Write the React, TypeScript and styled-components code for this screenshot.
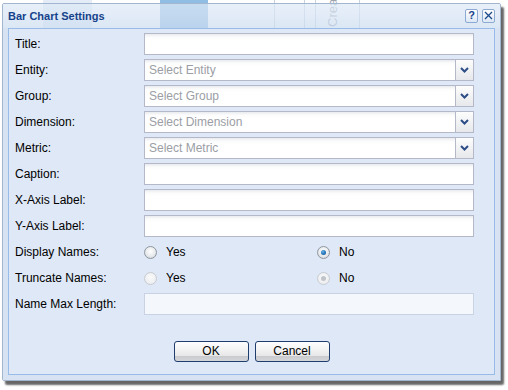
import React from "react";
import styled, { createGlobalStyle } from "styled-components";

const GlobalStyle = createGlobalStyle`
  html, body {
    margin: 0;
    padding: 0;
  }
  body {
    width: 508px;
    height: 390px;
    overflow: hidden;
    background: #ffffff;
    font-family: "Liberation Sans", Arial, sans-serif;
  }
`;

const Desktop = styled.div`
  position: relative;
  width: 508px;
  height: 390px;
  overflow: hidden;
  background: #ffffff;
`;

/* underlying grid columns that show through the window header */
const Column = styled.div<{ $left: number; $width: number; $color: string }>`
  position: absolute;
  top: 0;
  left: ${(p) => p.$left}px;
  width: ${(p) => p.$width}px;
  height: 40px;
  background: ${(p) => p.$color};
`;

const GridLine = styled.div<{ $left: number }>`
  position: absolute;
  top: 0;
  left: ${(p) => p.$left}px;
  width: 1px;
  height: 40px;
  background: #c9d3df;
`;

const VerticalText = styled.div`
  position: absolute;
  top: 0;
  left: 326px;
  width: 13px;
  height: 27px;
  writing-mode: vertical-rl;
  transform: rotate(180deg);
  font-size: 13px;
  color: #9ea5af;
  line-height: 13px;
  white-space: nowrap;
`;

const Window = styled.div`
  position: absolute;
  left: 2px;
  top: 3px;
  width: 499px;
  height: 378px;
  box-sizing: border-box;
  border: 1px solid #a3b6d0;
  border-radius: 2px;
  box-shadow: 3px 4px 2px rgba(0, 0, 0, 0.6);
  display: flex;
  flex-direction: column;
`;

const Header = styled.div`
  height: 23px;
  display: flex;
  align-items: center;
  padding: 0 5px 1px 5px;
  background: linear-gradient(
    rgba(222, 233, 246, 0.7),
    rgba(205, 221, 241, 0.7)
  );
`;

const Title = styled.div`
  flex: 1;
  font-size: 11px;
  font-weight: bold;
  color: #15428b;
`;

const Tools = styled.div`
  display: flex;
  gap: 4px;
`;

const Tool = styled.div`
  width: 13px;
  height: 14px;
  box-sizing: border-box;
  border: 1px solid #8daad3;
  border-radius: 2px;
  background: linear-gradient(#ffffff, #dce7f5);
  display: flex;
  align-items: center;
  justify-content: center;
  color: #15428b;
  font-size: 11px;
  font-weight: bold;
  line-height: 1;
`;

const Frame = styled.div`
  flex: 1;
  display: flex;
  padding: 0 5px 5px 5px;
  background: #d7e3f3;
`;

const Panel = styled.div`
  flex: 1;
  border: 1px solid #99bbe8;
  background: #dfe8f6;
  display: flex;
  flex-direction: column;
  padding: 4px 20px 0 6px;
`;

const Form = styled.div`
  display: grid;
  grid-template-columns: 129px 1fr;
  grid-auto-rows: 22px;
  row-gap: 4px;
  align-items: center;
`;

const Label = styled.div`
  font-size: 12px;
  color: #000;
`;

const TextField = styled.div<{ $disabled?: boolean }>`
  height: 22px;
  box-sizing: border-box;
  border: 1px solid ${(p) => (p.$disabled ? "#c9d3e3" : "#b5b8c8")};
  background: ${(p) =>
    p.$disabled
      ? "#f4f7fb"
      : "linear-gradient(#e9ebee 0px, #fbfbfc 3px, #ffffff 6px)"};
`;

const Combo = styled.div`
  height: 22px;
  box-sizing: border-box;
  border: 1px solid #b5b8c8;
  background: linear-gradient(#e9ebee 0px, #fbfbfc 3px, #ffffff 6px);
  display: flex;
  align-items: center;
`;

const Placeholder = styled.div`
  flex: 1;
  padding-left: 4px;
  font-size: 12px;
  color: #9b9ea5;
`;

const Trigger = styled.div`
  width: 17px;
  height: 100%;
  border-left: 1px solid #b5b8c8;
  background: linear-gradient(#fdfdfd, #e6e8eb);
  display: flex;
  align-items: center;
  justify-content: center;
`;

const RadioGroup = styled.div`
  display: grid;
  grid-template-columns: 173px 1fr;
  align-items: center;
`;

const RadioItem = styled.div`
  display: flex;
  align-items: center;
  gap: 9px;
  font-size: 12px;
  color: #000;
`;

const RadioCircle = styled.span<{ $checked?: boolean; $disabled?: boolean }>`
  width: 13px;
  height: 13px;
  box-sizing: border-box;
  border-radius: 50%;
  border: 1px solid ${(p) => (p.$disabled ? "#c8ccd2" : "#8e969f")};
  background: ${(p) =>
    p.$disabled
      ? "radial-gradient(circle at 50% 40%, #fafafa 0, #eceef0 70%)"
      : "radial-gradient(circle at 50% 40%, #ffffff 0, #e8eaed 55%, #c8cdd3 100%)"};
  display: flex;
  align-items: center;
  justify-content: center;

  &::after {
    content: "";
    display: ${(p) => (p.$checked ? "block" : "none")};
    width: 5px;
    height: 5px;
    border-radius: 50%;
    background: ${(p) =>
      p.$disabled
        ? "#c0c4c9"
        : "radial-gradient(circle at 40% 35%, #5fb3ea 0, #1563a8 70%, #0d3f73 100%)"};
  }
`;

const ButtonBar = styled.div`
  margin-top: auto;
  padding-bottom: 12px;
  padding-left: 14px;
  display: flex;
  justify-content: center;
  gap: 6px;
`;

const Button = styled.button`
  width: 75px;
  height: 21px;
  padding: 0 0 2px 0;
  box-sizing: border-box;
  border: 1px solid #1f3e6e;
  border-radius: 3px;
  background: linear-gradient(
    #fefefe 0%,
    #f3f3f3 40%,
    #e7e7e7 72%,
    #c9cbce 76%,
    #d4d6d9 100%
  );
  font-family: "Liberation Sans", Arial, sans-serif;
  font-size: 12px;
  color: #000;
`;

const Chevron = () => (
  <svg width="9" height="6" viewBox="0 0 9 6">
    <path d="M1 1 L4.5 4.5 L8 1" fill="none" stroke="#2c4d86" strokeWidth="2" />
  </svg>
);

const CloseIcon = () => (
  <svg width="9" height="9" viewBox="0 0 9 9">
    <path d="M1 1 L8 8 M8 1 L1 8" stroke="#1f4a8c" strokeWidth="1.3" />
  </svg>
);

const combos = [
  { label: "Entity:", placeholder: "Select Entity" },
  { label: "Group:", placeholder: "Select Group" },
  { label: "Dimension:", placeholder: "Select Dimension" },
  { label: "Metric:", placeholder: "Select Metric" },
];

const App: React.FC = () => {
  return (
    <Desktop>
      <GlobalStyle />
      <Column $left={43} $width={49} $color="#e4edf7" />
      <Column $left={160} $width={48} $color="#8fbde3" />
      <GridLine $left={274} />
      <GridLine $left={304} />
      <GridLine $left={315} />
      <GridLine $left={359} />
      <VerticalText>Crea</VerticalText>

      <Window>
        <Header>
          <Title>Bar Chart Settings</Title>
          <Tools>
            <Tool>?</Tool>
            <Tool>
              <CloseIcon />
            </Tool>
          </Tools>
        </Header>

        <Frame>
          <Panel>
            <Form>
              <Label>Title:</Label>
              <TextField />

              {combos.map((c) => (
                <React.Fragment key={c.label}>
                  <Label>{c.label}</Label>
                  <Combo>
                    <Placeholder>{c.placeholder}</Placeholder>
                    <Trigger>
                      <Chevron />
                    </Trigger>
                  </Combo>
                </React.Fragment>
              ))}

              <Label>Caption:</Label>
              <TextField />
              <Label>X-Axis Label:</Label>
              <TextField />
              <Label>Y-Axis Label:</Label>
              <TextField />

              <Label>Display Names:</Label>
              <RadioGroup>
                <RadioItem>
                  <RadioCircle />
                  Yes
                </RadioItem>
                <RadioItem>
                  <RadioCircle $checked />
                  No
                </RadioItem>
              </RadioGroup>

              <Label>Truncate Names:</Label>
              <RadioGroup>
                <RadioItem>
                  <RadioCircle $disabled />
                  Yes
                </RadioItem>
                <RadioItem>
                  <RadioCircle $checked $disabled />
                  No
                </RadioItem>
              </RadioGroup>

              <Label>Name Max Length:</Label>
              <TextField $disabled />
            </Form>

            <ButtonBar>
              <Button>OK</Button>
              <Button>Cancel</Button>
            </ButtonBar>
          </Panel>
        </Frame>
      </Window>
    </Desktop>
  );
};

export default App;
